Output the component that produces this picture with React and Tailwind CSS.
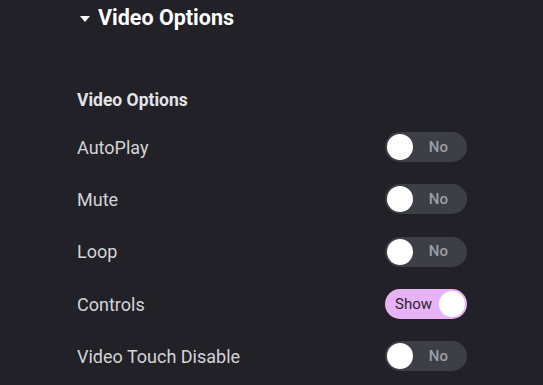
import React from 'react'

const rows = [
  { label: 'AutoPlay', on: false },
  { label: 'Mute', on: false },
  { label: 'Loop', on: false },
  { label: 'Controls', on: true },
  { label: 'Video Touch Disable', on: false },
]

function Toggle({ on }) {
  if (on) {
    return (
      <div className="flex h-[30px] w-[82px] items-center justify-between rounded-full bg-[#e8b2f6] pl-[10px] pr-[2px]">
        <span className="text-[15px] text-[#2b2230]">Show</span>
        <span className="h-[26px] w-[26px] rounded-full bg-white" />
      </div>
    )
  }
  return (
    <div className="flex h-[30px] w-[82px] items-center justify-between rounded-full bg-[#3d3f47] pl-[2px] pr-[19px]">
      <span className="h-[26px] w-[26px] rounded-full bg-white" />
      <span className="text-[15px] font-medium text-[#9c9ea6]">No</span>
    </div>
  )
}

export default function App() {
  return (
    <div className="h-[385px] w-[543px] overflow-hidden bg-[#222127] font-['Roboto',sans-serif]">
      <div className="flex h-[37px] items-center gap-[8px] pl-[80px]">
        <svg width="10" height="6" viewBox="0 0 10 6" aria-hidden="true">
          <path d="M0 0h10L5 6z" fill="#ffffff" />
        </svg>
        <span className="text-[21.5px] font-bold text-white">Video Options</span>
      </div>

      <div className="pl-[77px] pr-[76px]">
        <p className="mt-[53px] text-[17.5px] font-bold leading-[20px] text-[#e4e4e7]">Video Options</p>
        <div className="mt-[11px]">
          {rows.map((row) => (
            <div key={row.label} className="flex h-[52.3px] items-center justify-between">
              <span className="text-[18px] text-[#d4d4d8]">{row.label}</span>
              <Toggle on={row.on} />
            </div>
          ))}
        </div>
      </div>
    </div>
  )
}
